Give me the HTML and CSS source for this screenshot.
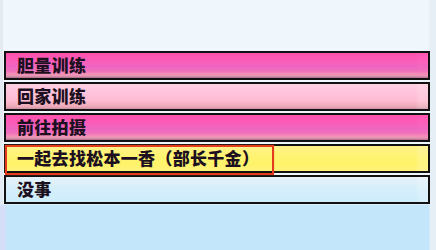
FILE: index.html
```html
<!DOCTYPE html>
<html lang="zh">
<head>
<meta charset="utf-8">
<title>选项</title>
<link rel="stylesheet" href="styles.css">
</head>
<body>
<div class="screen">
  <div class="choices">
    <div class="choice pink">胆量训练</div>
    <div class="choice light-pink">回家训练</div>
    <div class="choice pink">前往拍摄</div>
    <div class="choice yellow">一起去找松本一香（部长千金）</div>
    <div class="choice light-blue">没事</div>
  </div>
  <div class="highlight"></div>
</div>
</body>
</html>
```
FILE: styles.css
```css
html, body {
  margin: 0;
  padding: 0;
}

body {
  width: 436px;
  height: 250px;
  overflow: hidden;
  background:
    linear-gradient(to right, #e4eaf2 0, #e4eaf2 3px, transparent 3px, transparent 429px, #e6eef6 430px, #e6eef6 100%),
    linear-gradient(to bottom, #eff7fd 0, #eff7fd 204px, #c3e6fa 205px, #c3e6fa 100%);
}

.screen {
  position: relative;
  width: 436px;
  height: 250px;
}

.screen::after {
  content: "";
  position: absolute;
  left: 0;
  top: 205px;
  width: 6px;
  height: 45px;
  background: #d4def6;
}

.choices {
  display: flex;
  flex-direction: column;
  gap: 2px;
  padding: 51px 0 0 4px;
  width: 426px;
}

.choice {
  box-sizing: border-box;
  height: 29px;
  border: 2px solid #111;
  padding: 0 0 2px 11px;
  display: flex;
  align-items: center;
  font-family: "Noto Sans CJK SC", "Noto Sans CJK JP", sans-serif;
  font-weight: 900;
  font-size: 17px;
  letter-spacing: 0.3px;
  line-height: 1;
  color: #1c1020;
  white-space: nowrap;
}

.pink {
  background:
    linear-gradient(to right, transparent 97%, rgba(255, 120, 200, 0.15) 98%, rgba(255, 120, 200, 0.15) 100%),
    linear-gradient(to bottom, #ff52ae 0%, #fc5cb8 30%, #ee66c2 55%, #f070bc 72%, #f58fb8 84%, #e49ab2 92%, #a86888 100%);
}

.light-pink {
  background:
    linear-gradient(to right, transparent 97%, rgba(255, 255, 255, 0.15) 98%, rgba(255, 255, 255, 0.15) 100%),
    linear-gradient(to bottom, #ffcde0 0%, #ffc2da 40%, #ffbcd4 65%, #f3b0bf 82%, #e8a8b8 92%, #c890a0 100%);
}

.yellow {
  background:
    linear-gradient(to right, transparent 97%, rgba(255, 255, 255, 0.15) 98%, rgba(255, 255, 255, 0.15) 100%),
    linear-gradient(to bottom, #fff08c 0%, #fff474 35%, #fff36a 70%, #fff27a 100%);
}

.light-blue {
  background:
    linear-gradient(to right, transparent 97%, rgba(255, 255, 255, 0.2) 98%, rgba(255, 255, 255, 0.2) 100%),
    linear-gradient(to bottom, #e6f2f8 0%, #d6eefa 45%, #cdedfc 100%);
}

.highlight {
  position: absolute;
  left: 5px;
  top: 145px;
  width: 269px;
  height: 30px;
  box-sizing: border-box;
  border: 2px solid #e43a1e;
  box-shadow: 0 0 1px rgba(240, 90, 40, 0.7);
}
```
